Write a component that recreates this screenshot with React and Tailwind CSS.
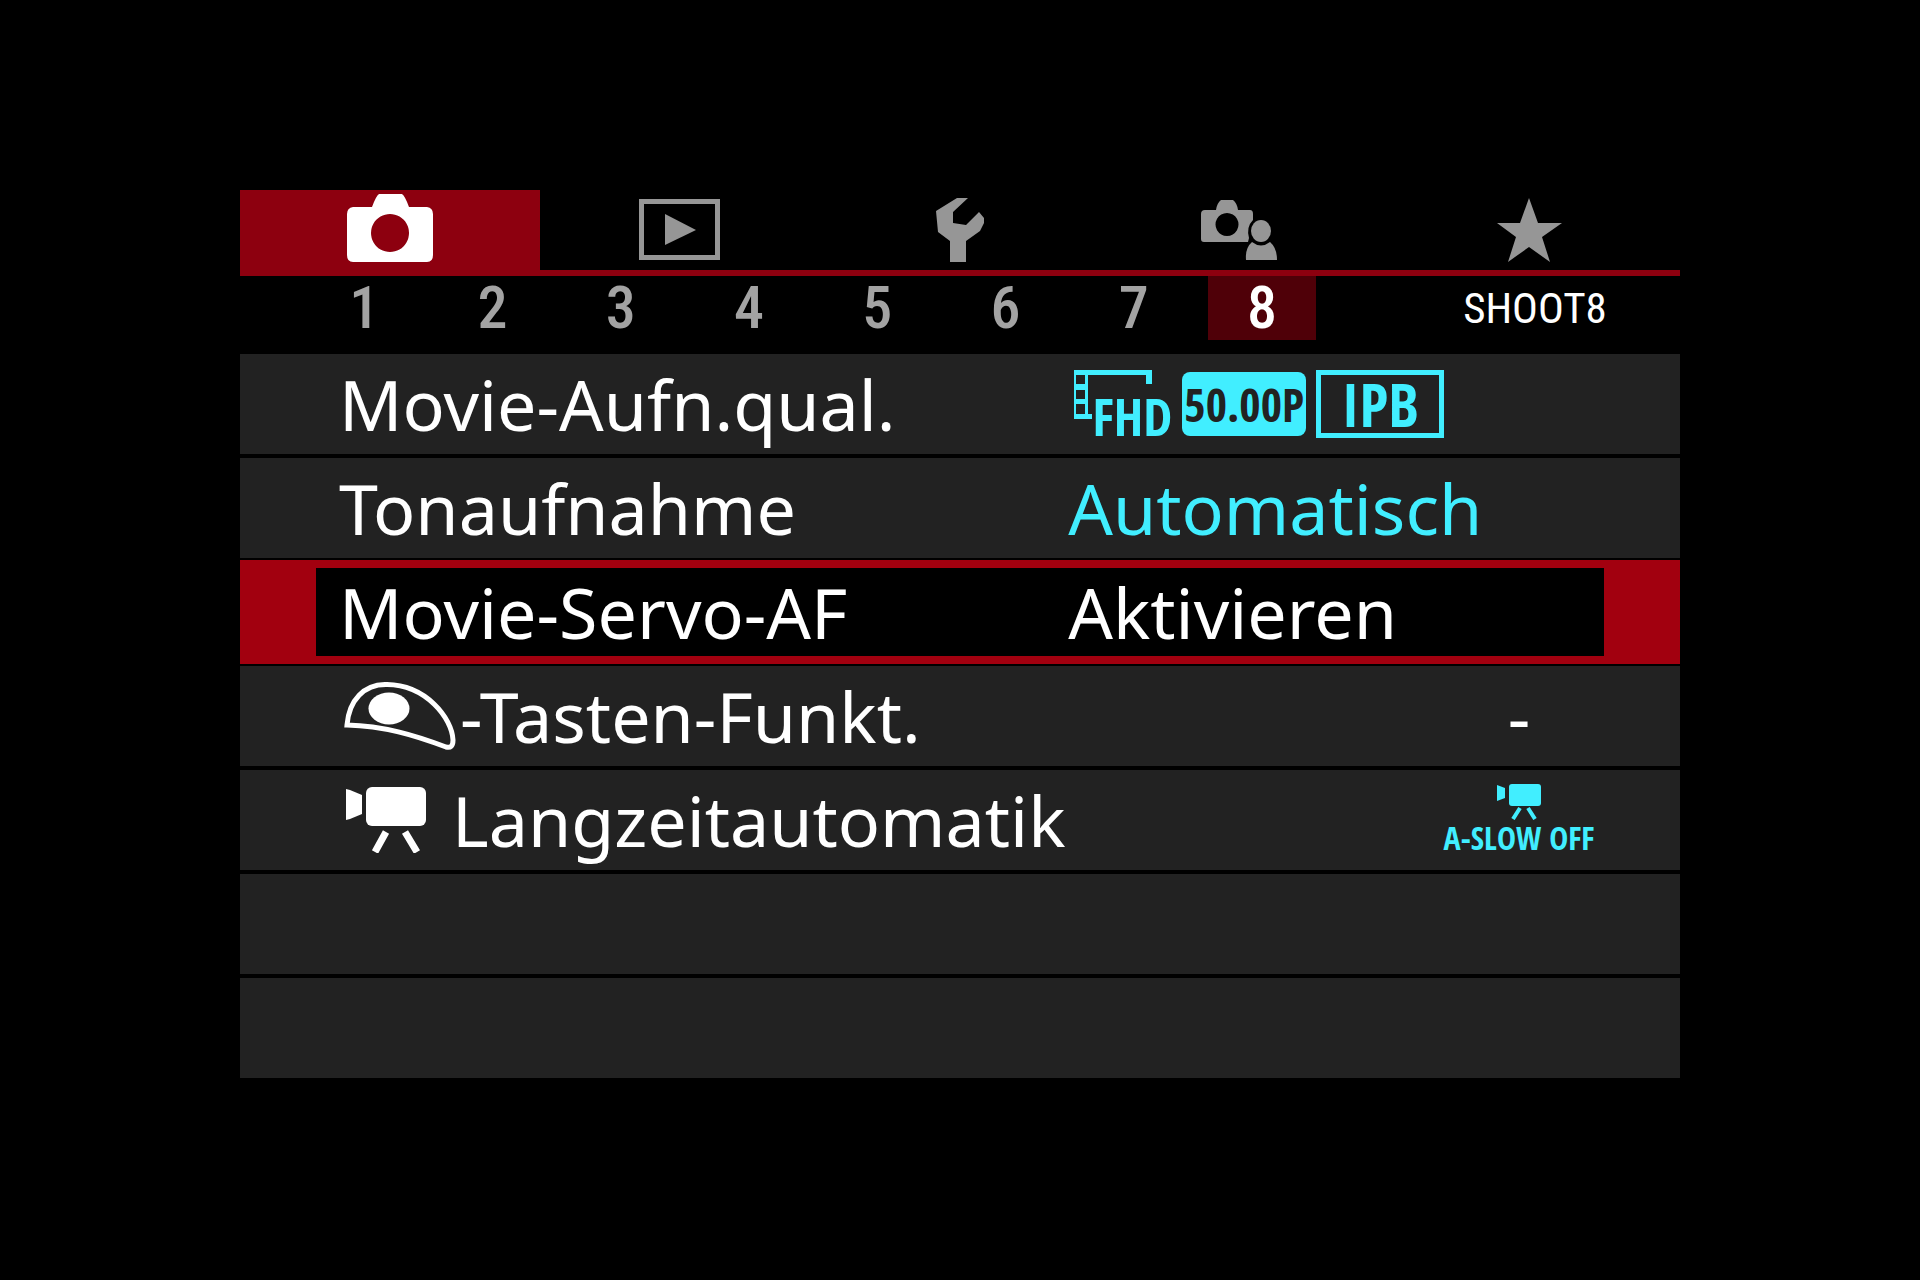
import React, { useState } from "react";

function CameraIcon() {
  return (
    <svg viewBox="0 0 87 72" className="h-[72px] w-[87px]" fill="currentColor" aria-hidden="true">
      <path
        fillRule="evenodd"
        d="M32 0H55Q58 2 62 13H80Q86 14 86 20V61Q86 68 80 68H6Q0 68 0 61V20Q0 14 6 13H25Q29 2 32 0ZM43 20a19 19 0 1 0 .01 0Z"
      />
    </svg>
  );
}

function PlaybackIcon() {
  return (
    <svg viewBox="0 0 82 62" className="h-[62px] w-[82px]" aria-hidden="true">
      <rect x="2.5" y="2.5" width="76" height="56" fill="none" stroke="currentColor" strokeWidth="5" />
      <path d="M26 15L57 31L26 46Z" fill="currentColor" />
    </svg>
  );
}

function WrenchIcon() {
  return (
    <svg viewBox="1 0 49 64" className="h-[64px] w-[49px]" fill="currentColor" aria-hidden="true">
      <path d="M22 0H33L18 14V25L31 27L44 14L49 20V25L45 33L31 43V64H15V43L3 34L1 13Z" />
    </svg>
  );
}

function CustomIcon() {
  return (
    <svg viewBox="1 0 78 60" className="h-[60px] w-[78px]" fill="currentColor" aria-hidden="true">
      <path
        fillRule="evenodd"
        d="M21 0H33Q37 3 38 10H50Q53 10 53 14V20Q46 27 49 38L48 42H4Q1 42 1 39V14Q1 10 5 10H16Q17 3 21 0ZM27 13a11.5 11.5 0 1 0 .01 0Z"
      />
      <ellipse cx="61" cy="31" rx="10" ry="11" />
      <path d="M46 60Q45 48 52 42Q61 49 70 42Q77 48 77 60Z" />
    </svg>
  );
}

function StarIcon() {
  return (
    <svg viewBox="1 0 66 64" className="h-[64px] w-[66px]" fill="currentColor" aria-hidden="true">
      <path d="M33 0L42 25H66L46 39L54 64L33 49L12 64L20 39L1 25H24Z" />
    </svg>
  );
}

function ButtonShapeIcon() {
  return (
    <svg viewBox="-5 0 121 68" className="h-[68px] w-[121px] shrink-0" role="img" aria-label="Video">
      <path
        d="M3 43C5 18 20 2 43 2.5C82 3 108 36 109 58Q109 67 102 65C70 53 40 44 3 43Z"
        fill="none"
        stroke="currentColor"
        strokeWidth="5"
      />
      <ellipse cx="45" cy="26.5" rx="20.5" ry="16" fill="currentColor" />
    </svg>
  );
}

function MovieCameraIcon() {
  return (
    <svg viewBox="-7 0 113 66" className="h-[66px] w-[113px] shrink-0" role="img" aria-label="Movie">
      <path d="M0 2L4 3L16 8V27L4 32L0 33Z" fill="currentColor" />
      <rect x="20" y="0" width="60" height="39" rx="6" fill="currentColor" />
      <path d="M40 45L29 65M59 45L71 65" stroke="currentColor" strokeWidth="7" />
    </svg>
  );
}

function QualityValue() {
  return (
    <span className="flex items-center gap-2.5 pl-1.5 font-['Open_Sans_Condensed','Roboto_Condensed',sans-serif] font-bold">
      <span className="relative flex h-[68px] w-[98px] items-end justify-end">
        <svg viewBox="0 0 98 68" className="absolute inset-0 h-full w-full" aria-hidden="true">
          <path d="M0 0H78V14H72V5H14V44H18V49H0Z" fill="currentColor" />
          <path d="M2 5H11V14H2ZM2 20H11V29H2ZM2 34H11V44H2Z" fill="#222222" />
        </svg>
        <span className="relative text-[52px] leading-[44px]">FHD</span>
      </span>
      <span className="flex h-16 w-[124px] items-center justify-center rounded-lg bg-[#41eeff] text-[46px] leading-none text-[#222222]">
        50.00P
      </span>
      <span className="flex h-[68px] w-32 items-center justify-center border-5 border-[#41eeff] text-[60px] leading-none">
        IPB
      </span>
    </span>
  );
}

function SlowShutterValue() {
  return (
    <span className="flex w-[150px] flex-col items-center font-['Open_Sans_Condensed','Roboto_Condensed',sans-serif] text-[32px] leading-9 font-bold">
      <svg viewBox="0 0 44 36" className="h-9 w-11" aria-hidden="true">
        <path d="M0 1L8 4V14L0 17Z" fill="currentColor" />
        <rect x="12" y="0" width="32" height="22" rx="3" fill="currentColor" />
        <path d="M23 24L16 35M31 24L38 35" stroke="currentColor" strokeWidth="4" />
      </svg>
      <span className="whitespace-nowrap">A-SLOW OFF</span>
    </span>
  );
}

const tabs = [
  { name: "Aufnahme", Icon: CameraIcon },
  { name: "Wiedergabe", Icon: PlaybackIcon },
  { name: "Einstellungen", Icon: WrenchIcon },
  { name: "Individualfunktionen", Icon: CustomIcon },
  { name: "My Menu", Icon: StarIcon },
];

const pages = [1, 2, 3, 4, 5, 6, 7, 8];

const items = [
  { id: "quality", label: "Movie-Aufn.qual.", value: <QualityValue />, cyan: true },
  { id: "sound", label: "Tonaufnahme", value: "Automatisch", cyan: true },
  { id: "servo", label: "Movie-Servo-AF", value: "Aktivieren" },
  {
    id: "button",
    icon: <ButtonShapeIcon />,
    label: "-Tasten-Funkt.",
    value: <span className="w-[150px] text-center">-</span>,
    right: true,
  },
  {
    id: "slow",
    icon: <MovieCameraIcon />,
    label: "Langzeitautomatik",
    value: <SlowShutterValue />,
    cyan: true,
    right: true,
  },
];

function MenuRow({ item, selected, onSelect }) {
  return (
    <li className={selected ? "-my-0.5" : ""}>
      <button
        type="button"
        onClick={onSelect}
        aria-current={selected}
        className={
          "grid w-full grid-cols-[58.4%_1fr] items-center border-x-[76px] text-left whitespace-nowrap text-white " +
          (selected ? "h-[104px] border-y-8 border-[#a2000f] bg-black" : "h-[100px] border-[#222222] bg-[#222222]")
        }
      >
        <span className="flex items-center pl-[23px]">
          {item.icon}
          <span>{item.label}</span>
        </span>
        <span className={"flex items-center " + (item.right ? "justify-end pr-2.5 " : "") + (item.cyan ? "text-[#41eeff]" : "")}>
          {item.value}
        </span>
      </button>
    </li>
  );
}

export default function App() {
  const [tab, setTab] = useState(0);
  const [page, setPage] = useState(8);
  const [row, setRow] = useState("servo");

  return (
    <main className="min-h-screen bg-black pt-[190px] font-['Noto_Sans','Open_Sans',sans-serif]">
      <div className="mx-auto w-3/4">
        <nav className="grid grid-cols-[300fr_280fr_280fr_280fr_300fr] border-b-6 border-[#8d000f]">
          {tabs.map(({ name, Icon }, i) => (
            <button
              key={name}
              type="button"
              aria-label={name}
              onClick={() => setTab(i)}
              className={"flex h-20 items-center justify-center " + (i === tab ? "bg-[#8d000f] text-white" : "text-[#969696]")}
            >
              <Icon />
            </button>
          ))}
        </nav>
        <div className="grid grid-cols-[60fr_1026fr_354fr] font-['Roboto_Condensed','Roboto',sans-serif]">
          <nav className="col-start-2 grid grid-cols-8 text-[60px] leading-none font-medium">
            {pages.map((n) => (
              <button
                key={n}
                type="button"
                onClick={() => setPage(n)}
                className={"mx-2.5 h-16 " + (n === page ? "bg-[#4f0008] text-white" : "text-[#a3a3a3]")}
              >
                {n}
              </button>
            ))}
          </nav>
          <p className="flex items-center justify-center pl-16 text-[43px] leading-none font-normal text-white">SHOOT8</p>
        </div>
        <ul className="mt-3.5 flex flex-col gap-1 text-[70px] leading-none">
          {items.map((item) => (
            <MenuRow key={item.id} item={item} selected={item.id === row} onSelect={() => setRow(item.id)} />
          ))}
          <li className="h-[100px] bg-[#222222]" />
          <li className="h-[100px] bg-[#222222]" />
        </ul>
      </div>
    </main>
  );
}
